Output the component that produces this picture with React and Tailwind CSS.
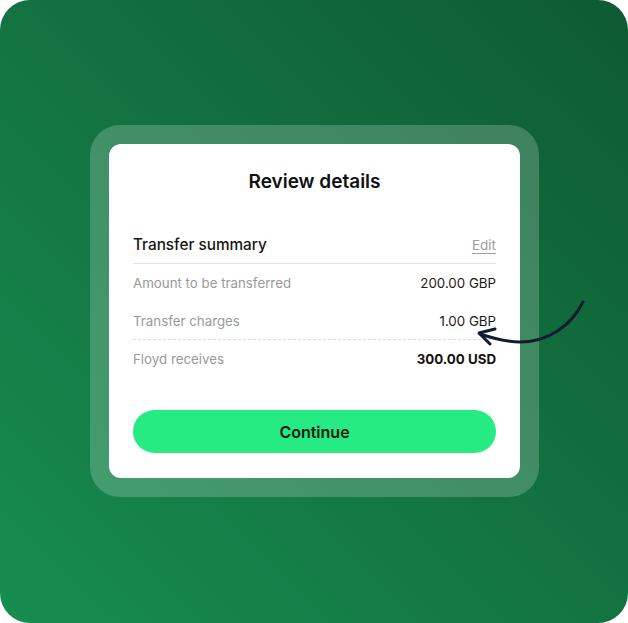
const rows = [
  { label: 'Amount to be transferred', value: '200.00 GBP' },
  { label: 'Transfer charges', value: '1.00 GBP', dashed: true },
  { label: 'Floyd receives', value: '300.00 USD', bold: true },
];

function Arrow() {
  return (
    <svg
      className="absolute left-0 top-0 pointer-events-none"
      width="628"
      height="623"
      viewBox="0 0 628 623"
      fill="none"
    >
      <path
        d="M583 302 C 571 326, 548 342, 520 342 C 505 342, 492 338, 480 334"
        stroke="#0f1d2c"
        strokeWidth="3"
        strokeLinecap="round"
      />
      <path
        d="M495 329 L 479 333 L 490 344"
        stroke="#0f1d2c"
        strokeWidth="3"
        strokeLinecap="round"
        strokeLinejoin="round"
      />
    </svg>
  );
}

export default function App() {
  return (
    <div className="w-[628px] h-[623px] bg-white" style={{ fontFamily: 'Inter, "Noto Sans", sans-serif' }}>
      <div className="relative w-full h-full rounded-[30px] bg-gradient-to-tr from-[#178d50] to-[#0e5a33] flex items-center justify-center overflow-hidden">
        <div className="mt-[-1px] ml-[1px] rounded-[30px] bg-white/20 p-[19px]">
          <div className="w-[411px] h-[334px] rounded-[12px] bg-white px-6 pt-[26px] pb-[25px] flex flex-col">
            <h1 className="text-center text-[19px] leading-6 font-semibold text-[#111]">Review details</h1>
            <div className="mt-[39px] flex items-center justify-between pb-[6px] border-b border-[#e3e3e3]">
              <span className="text-[15.3px] leading-6 font-medium text-[#161616]">Transfer summary</span>
              <span className="text-[13.5px] leading-6 text-[#a0a0a0] underline underline-offset-[3px]">Edit</span>
            </div>
            {rows.map((row) => (
              <div
                key={row.label}
                className={
                  'flex items-center justify-between h-[38px] pt-[2px] text-[13.3px] ' +
                  (row.dashed ? 'border-b border-dashed border-[#dcdcdc]' : '')
                }
              >
                <span className="text-[#9a9a9a]">{row.label}</span>
                <span className={row.bold ? 'font-bold text-[#111]' : 'text-[#1a1a1a]'}>{row.value}</span>
              </div>
            ))}
            <button className="mt-auto h-[43px] w-full rounded-full bg-[#25eb82] text-[16px] font-semibold text-[#0c1a12]">
              Continue
            </button>
          </div>
        </div>
        <Arrow />
      </div>
    </div>
  );
}
